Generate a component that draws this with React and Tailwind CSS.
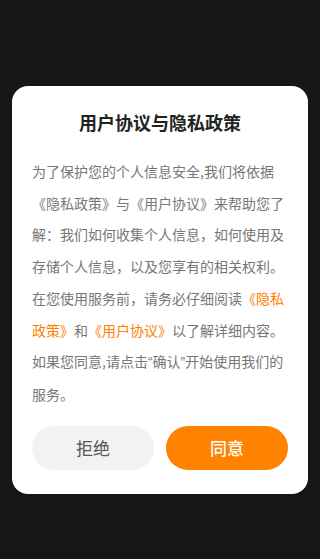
export default function App() {
  const font = { fontFamily: '"Noto Sans CJK SC", "Noto Sans", sans-serif' };
  return (
    <div className="w-[320px] h-[559px] bg-[#161616] pt-[86px] px-3" style={font}>
      <div className="bg-white rounded-2xl px-5 pt-[22px] pb-6">
        <h1 className="text-center text-[18px] leading-[28px] font-semibold text-[#222]">用户协议与隐私政策</h1>
        <div className="mt-[20px] text-[14px] leading-[31.7px] text-[#777]">
          <p>为了保护您的个人信息安全,我们将依据《隐私政策》与《用户协议》来帮助您了解：我们如何收集个人信息，如何使用及存储个人信息，以及您享有的相关权利。</p>
          <p>在您使用服务前，请务必仔细阅读<span className="text-[#ff8000]">《隐私政策》</span>和<span className="text-[#ff8000]">《用户协议》</span>以了解详细内容。</p>
          <p>如果您同意,请点击<span className="font-['Liberation_Sans',sans-serif]">“</span>确认<span className="font-['Liberation_Sans',sans-serif]">”</span>开始使用我们的服务。</p>
        </div>
        <div className="mt-[15px] flex gap-3">
          <button className="flex-1 h-[44px] rounded-full bg-[#f2f2f2] text-[#555] text-[17px]">拒绝</button>
          <button className="flex-1 h-[44px] rounded-full bg-[#ff8200] text-white text-[17px] font-medium">同意</button>
        </div>
      </div>
    </div>
  );
}
